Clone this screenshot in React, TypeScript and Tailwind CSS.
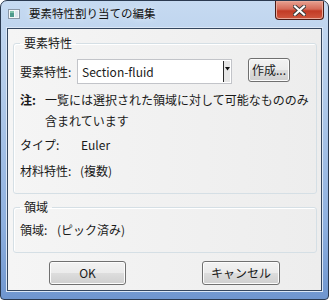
import { FC, ReactNode } from 'react';

const Btn: FC<{ children: ReactNode; className?: string }> = ({ children, className }) => (
  <button
    className={`flex items-center justify-center rounded-[3px] border border-[#707070] bg-[linear-gradient(#f2f2f2_0%,#ebebeb_50%,#dddddd_51%,#cfcfcf_100%)] shadow-[inset_0_0_0_1px_#fcfcfc] text-[12px] leading-none text-[#1a1a1a] ${className ?? ''}`}
  >
    {children}
  </button>
);

const Group: FC<{ title: string; children: ReactNode; className?: string }> = ({ title, children, className }) => (
  <fieldset className={`ml-[5px] mr-[4px] rounded-[3px] border border-[#d5dfe5] shadow-[inset_1px_1px_0_#ffffff] ${className ?? ''}`}>
    <legend className="ml-[6px] px-[4px] leading-[16px] text-[12px]">{title}</legend>
    {children}
  </fieldset>
);

export default function App() {
  return (
    <div className="w-[329px] h-[300px] flex flex-col overflow-hidden rounded-t-[7px] rounded-b-[4px] border border-[#2b3a50] bg-[linear-gradient(#c6daf1_0%,#b2cbea_30%,#8eb0df_75%,#6f96cf_100%)] font-['Noto_Sans_CJK_JP','Noto_Sans',sans-serif] text-[12px] text-[#1a1a1a]">
      {/* title bar */}
      <div className="h-[27px] shrink-0 flex items-start">
        <svg className="ml-[7px] mt-[8px]" width="12" height="10" viewBox="0 0 12 10">
          <rect x="0.5" y="0.5" width="11" height="9" fill="#f4f6f8" stroke="#8a97a6" />
          <rect x="2" y="2" width="4" height="6" fill="#4f9a8c" />
          <rect x="2" y="2" width="4" height="2" fill="#7fc0a8" />
          <rect x="7" y="2" width="3" height="6" fill="#dfe6ee" />
        </svg>
        <span className="ml-[9px] mt-[4px] text-[11.5px] leading-[16px] text-[#111] [text-shadow:0_0_6px_#e8f0fa]">
          要素特性割り当ての編集
        </span>
        <div className="ml-auto mr-[4px] h-[19px] w-[49px] flex items-center justify-center rounded-b-[4px] border border-t-0 border-[#4a1c16] bg-[linear-gradient(#e8a191_0%,#d56a58_45%,#c23b25_55%,#d0573f_100%)] shadow-[inset_0_0_0_1px_#e9a899]">
          <svg width="13" height="11" viewBox="0 0 13 11">
            <path d="M2 1.5 L11 9.5 M11 1.5 L2 9.5" stroke="#3a3a3a" strokeWidth="4" strokeLinecap="square" />
            <path d="M2 1.5 L11 9.5 M11 1.5 L2 9.5" stroke="#ffffff" strokeWidth="2.2" strokeLinecap="square" />
          </svg>
        </div>
      </div>

      {/* client area */}
      <div className="mx-[6px] mb-[8px] flex-1 flex flex-col border border-[#34465e] bg-[linear-gradient(90deg,#f5f5f5,#ededed)] shadow-[0_0_0_1px_#dbe7f6]">
        <Group title="要素特性" className="mt-[6px]">
          <div className="pt-[8px] pl-[6px] pb-[12px]">
            <div className="flex items-start">
              <span className="w-[57px] leading-[25px]">要素特性:</span>
              <div className="relative w-[155px] h-[25px] border border-[#c2c4c9] bg-white flex items-center pl-[4px]">
                <span className="leading-none">Section-fluid</span>
                <div className="absolute right-[1px] top-[1px] bottom-[1px] w-[7px] border-l border-[#2a2a2a] bg-[#e6e6e6] flex justify-center pt-[6px]">
                  <svg width="5" height="4" viewBox="0 0 5 4">
                    <path d="M0 0 L5 0 L2.5 3.5 Z" fill="#111" />
                  </svg>
                </div>
              </div>
              <Btn className="ml-[16px] -mt-[1px] w-[42px] h-[24px]">作成...</Btn>
            </div>
            <div className="mt-[5px] flex leading-[21px]">
              <span className="w-[25px] shrink-0 font-bold">注:</span>
              <span>
                一覧には選択された領域に対して可能なもののみ
                <br />
                含まれています
              </span>
            </div>
            <div className="mt-[4px] flex leading-[20px]">
              <span className="w-[61px]">タイプ:</span>
              <span>Euler</span>
            </div>
            <div className="mt-[6px] flex leading-[20px]">
              <span className="w-[60px]">材料特性:</span>
              <span>(複数)</span>
            </div>
          </div>
        </Group>

        <Group title="領域" className="mt-[5px]">
          <div className="pt-[5px] pl-[6px] pb-[12px] leading-[20px] flex">
            <span className="w-[37px]">領域:</span>
            <span>(ピック済み)</span>
          </div>
        </Group>

        <div className="mt-[8px] ml-[41px] flex gap-[76px]">
          <Btn className="w-[77px] h-[24px]">OK</Btn>
          <Btn className="w-[78px] h-[24px]">キャンセル</Btn>
        </div>
      </div>
    </div>
  );
}
